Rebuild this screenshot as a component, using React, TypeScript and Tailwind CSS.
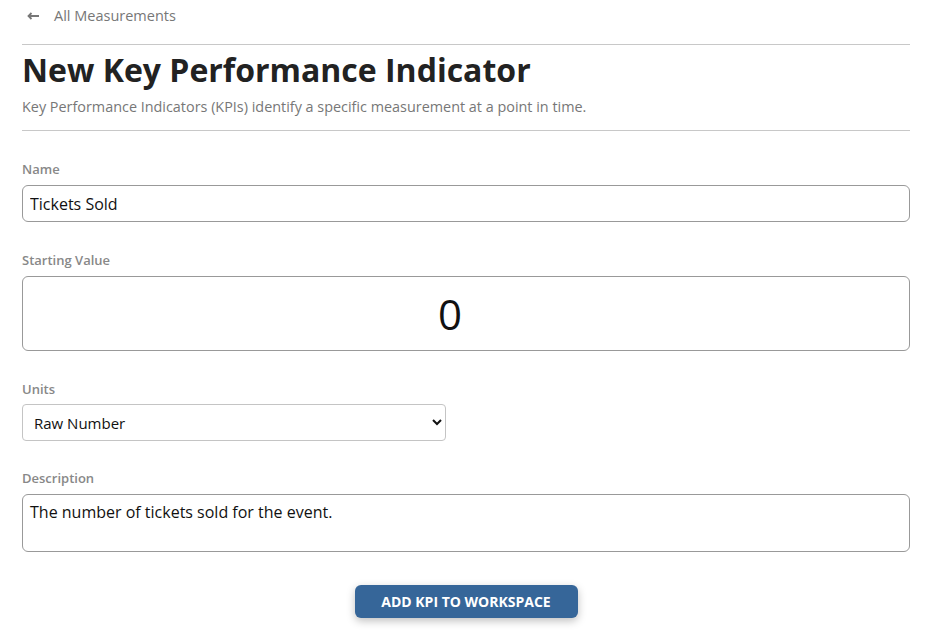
export default function App() {
  return (
    <div className="min-h-screen bg-white px-[22px] text-[#222]" style={{ fontFamily: "'Open Sans', sans-serif" }}>
      <div className="w-[888px]">
        <a className="flex h-[32px] items-center gap-[15px] pl-[5px] text-[14.5px] text-[#777]">
          <svg width="12" height="8" viewBox="0 0 12 8" fill="none" stroke="#777" strokeWidth="1.8">
            <path d="M12 4H1.5M4.5 1L1.5 4l3 3" />
          </svg>
          <span>All Measurements</span>
        </a>
        <div className="mt-[12px] border-t border-[#c8c8c8]" />
        <h1 className="mt-[5px] text-[32px] leading-[40px] font-bold text-[#222]">New Key Performance Indicator</h1>
        <p className="mt-[7px] text-[14.4px] leading-[20px] text-[#777]">
          Key Performance Indicators (KPIs) identify a specific measurement at a point in time.
        </p>
        <div className="mt-[13px] border-t border-[#c8c8c8]" />

        <form className="flex flex-col">
          <label className="mt-[29px] text-[13px] leading-[18px] font-semibold text-[#888]">Name</label>
          <input
            defaultValue="Tickets Sold"
            className="mt-[7px] h-[37px] w-full rounded-[6px] border border-[#999] px-[7px] text-[16px] text-[#111] outline-none"
          />

          <label className="mt-[29px] text-[13px] leading-[18px] font-semibold text-[#888]">Starting Value</label>
          <input
            defaultValue="0"
            className="mt-[7px] h-[75px] w-full rounded-[6px] border border-[#999] pr-[32px] text-center text-[42px] text-[#111] outline-none"
          />

          <label className="mt-[29px] text-[13px] leading-[18px] font-semibold text-[#888]">Units</label>
          <select
            defaultValue="raw"
            className="mt-[6px] h-[37px] w-[424px] rounded-[4px] border border-[#c4c4c4] bg-white px-[7px] text-[15px] text-[#111] outline-none"
          >
            <option value="raw">Raw Number</option>
            <option value="pct">Percentage</option>
            <option value="cur">Currency</option>
          </select>

          <label className="mt-[28px] text-[13px] leading-[18px] font-semibold text-[#888]">Description</label>
          <textarea
            defaultValue="The number of tickets sold for the event."
            className="mt-[7px] h-[58px] w-full resize-none rounded-[6px] border border-[#999] px-[7px] pt-[6px] text-[16px] leading-[22px] text-[#111] outline-none"
          />

          <div className="mt-[33px] flex justify-center">
            <button
              type="button"
              className="h-[33px] w-[223px] rounded-[6px] bg-[#366699] text-[14px] font-bold text-white uppercase shadow-[0_3px_8px_rgba(0,0,0,0.25)]"
            >
              Add KPI to Workspace
            </button>
          </div>
        </form>
      </div>
    </div>
  );
}
